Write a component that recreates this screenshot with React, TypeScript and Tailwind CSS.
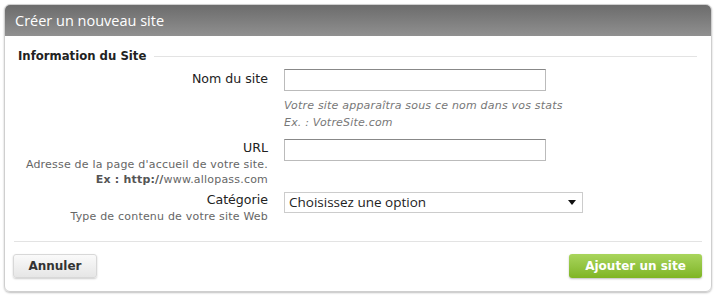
import React from 'react';

const verdana = { fontFamily: '"DejaVu Sans", Verdana, sans-serif' };

const Label: React.FC<{ children: React.ReactNode }> = ({ children }) => (
  <div className="text-[12.6px] leading-[16px] text-[#222]">{children}</div>
);

const Hint: React.FC<{ children: React.ReactNode; className?: string }> = ({ children, className }) => (
  <div className={`text-[11px] tracking-[0.2px] text-[#666] ${className ?? ''}`}>{children}</div>
);

const App: React.FC = () => {
  return (
    <div className="w-[717px] h-[298px] bg-white pt-[4px] pl-[4px]" style={verdana}>
      <div className="w-[708px] h-[288px] border border-[#cfcfcf] rounded-[6px] shadow-[0_1px_2px_rgba(0,0,0,0.25)] overflow-hidden flex flex-col">
        <div
          className="h-[31px] shrink-0 flex items-center pl-[10px] text-white text-[14.5px] bg-gradient-to-b from-[#6c6c6c] to-[#909090]"
          style={{ fontFamily: '"Open Sans", sans-serif' }}
        >
          Créer un nouveau site
        </div>

        <div className="flex-1 flex flex-col px-[8px]">
          <div className="flex items-center mt-[13px] pl-[5px] pr-[6px]">
            <span className="text-[11.7px] leading-[15px] font-bold text-[#222] pr-[8px]">Information du Site</span>
            <div className="flex-1 h-px bg-[#e3e3e3]" />
          </div>

          <div className="grid grid-cols-[255px_1fr] gap-x-[16px] mt-[4px]">
            <div className="text-right pt-[3px]">
              <Label>Nom du site</Label>
            </div>
            <div>
              <input className="w-[262px] h-[22px] border border-[#bbb] border-t-[#888] bg-white outline-none" />
              <Hint className="italic leading-[17px] mt-[5px] text-[#777]">Votre site apparaîtra sous ce nom dans vos stats</Hint>
              <Hint className="italic leading-[17px] text-[#777]">Ex. : VotreSite.com</Hint>
            </div>

            <div className="text-right pt-[9px]">
              <Label>URL</Label>
              <Hint className="leading-[15px] mt-[1px]">Adresse de la page d'accueil de votre site.</Hint>
              <Hint className="leading-[15px]">
                <b className="text-[#555]">Ex : http://</b>www.allopass.com
              </Hint>
            </div>
            <div className="pt-[7px]">
              <input className="w-[262px] h-[22px] border border-[#bbb] border-t-[#888] bg-white outline-none" />
            </div>

            <div className="text-right pt-[5px]">
              <Label>Catégorie</Label>
              <Hint className="leading-[15px] mt-[1px]">Type de contenu de votre site Web</Hint>
            </div>
            <div className="pt-[5px]">
              <div className="w-[299px] h-[21px] border border-[#ccc] flex items-center justify-between pl-[4px] pr-[6px] text-[13.5px] text-[#222]" style={{ fontFamily: '"Open Sans", sans-serif' }}>
                <span>Choisissez une option</span>
                <svg width="8" height="5" viewBox="0 0 8 5"><path d="M0 0h8L4 5z" fill="#111" /></svg>
              </div>
            </div>
          </div>

          <div className="h-px bg-[#e3e3e3] mt-[17px] mx-[1px]" />

          <div className="flex justify-between mt-[12px] pr-[1px]">
            <button className="w-[84px] h-[24px] rounded-[3px] border border-[#d8d8d8] bg-gradient-to-b from-[#fafafa] to-[#e6e6e6] shadow-[0_1px_2px_rgba(0,0,0,0.2)] text-[12px] font-bold text-[#333]" style={verdana}>
              Annuler
            </button>
            <button className="w-[133px] h-[24px] rounded-[3px] bg-gradient-to-b from-[#a9d55c] to-[#7fb522] shadow-[0_1px_2px_rgba(0,0,0,0.25)] text-[12px] font-bold text-white" style={verdana}>
              Ajouter un site
            </button>
          </div>
        </div>
      </div>
    </div>
  );
};

export default App;
